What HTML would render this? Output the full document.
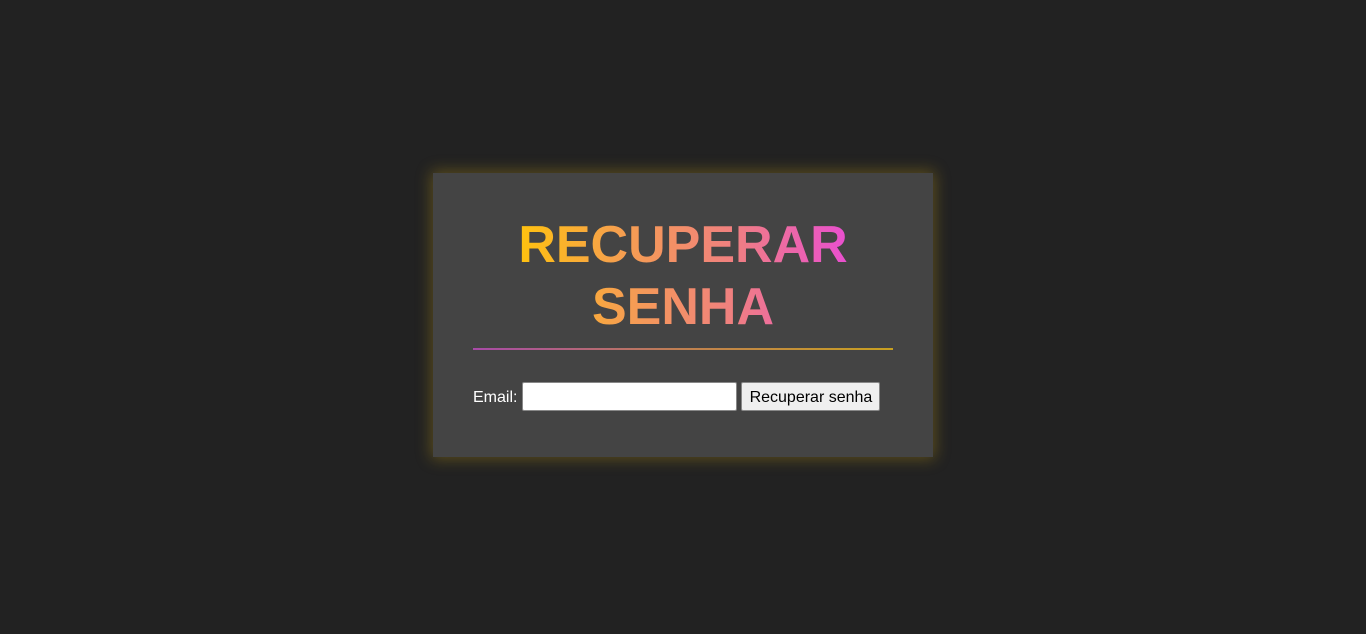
<!DOCTYPE html>
<html><head><style>
html,body{margin:0;padding:0;background:#222;width:1366px;height:634px;overflow:hidden;font-family:"Liberation Sans",Arial,sans-serif;}
.card{position:absolute;left:433px;top:173px;width:420px;height:204px;padding:40px;background:#444;box-shadow:0 0 14px 2px rgba(200,160,20,0.35);}
.t{text-align:center;margin:0;height:124px;padding-top:1px;}
.t span{display:inline-block;font-size:52px;line-height:62px;font-weight:bold;background:linear-gradient(to right,#ffc20e,#f6a04d 30%,#f08080 65%,#e94fd0);-webkit-background-clip:text;background-clip:text;color:transparent;}
.hr{position:absolute;left:40px;top:175px;width:420px;height:2px;background:linear-gradient(to right,#a84aa8,#c08050 50%,#c8a020);}
.row{position:absolute;left:40px;top:209px;height:29px;display:flex;align-items:center;font-size:16px;color:#fff;}
.lbl{padding-top:2px;}
.inp{box-sizing:border-box;width:215px;height:29px;background:#fff;border:1px solid #888;border-radius:2px;margin-left:5px;}
.btn{margin-left:4px;background:#efefef;border:1px solid #888;border-radius:2px;color:#000;font-size:16px;display:flex;align-items:center;justify-content:center;box-sizing:border-box;height:29px;width:139px;padding-top:2px;}
</style></head><body>
<div class="card">
<div class="t"><span>RECUPERAR<br>SENHA</span></div>
<div class="hr"></div>
<div class="row"><span class="lbl">Email:</span><div class="inp"></div><div class="btn">Recuperar senha</div></div>
</div>
</body></html>
